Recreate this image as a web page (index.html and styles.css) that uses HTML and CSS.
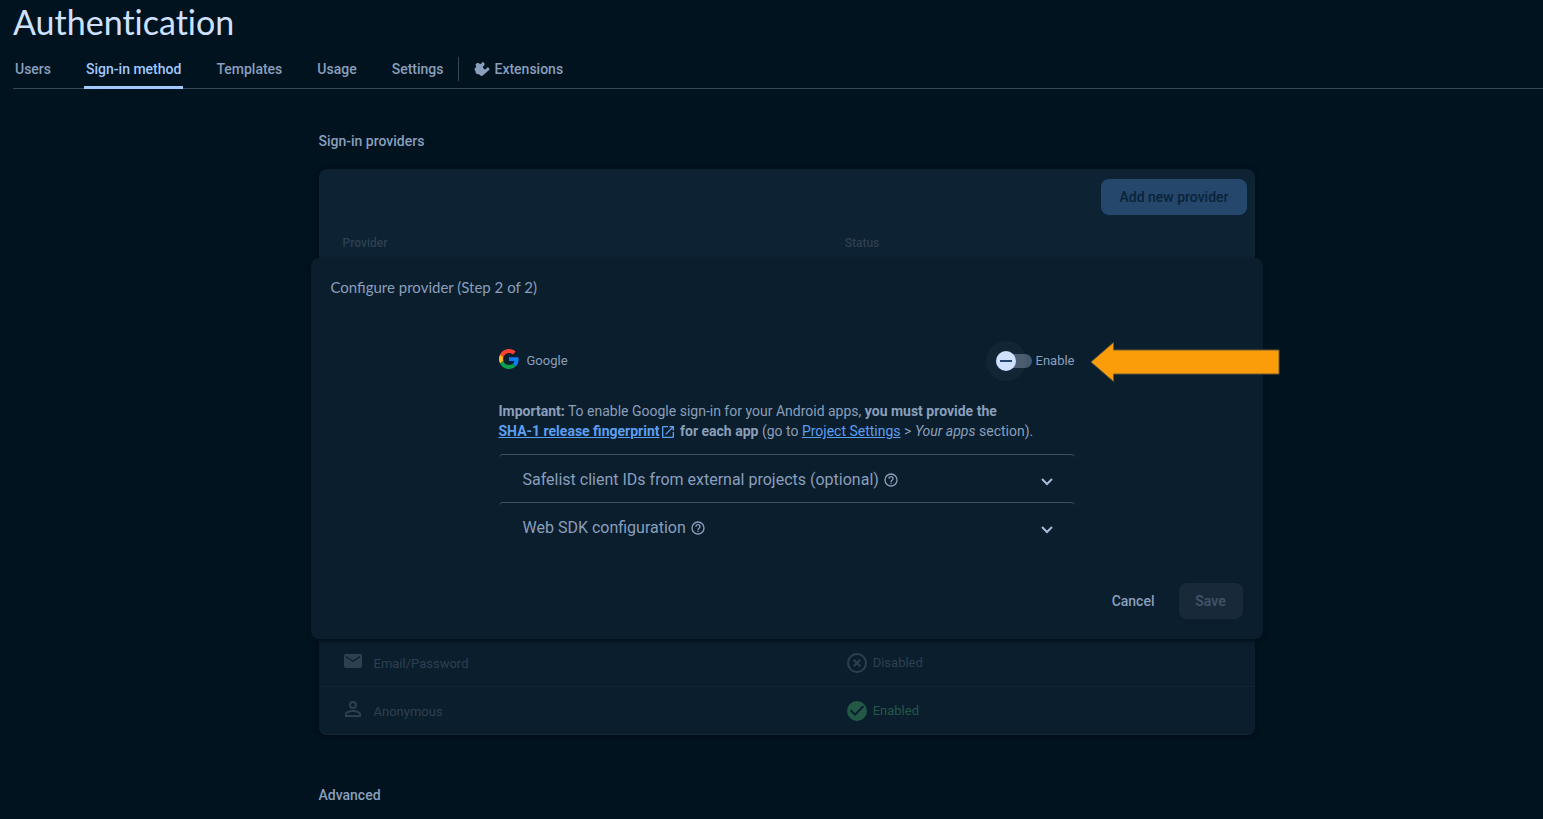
FILE: index.html
```
<!DOCTYPE html>
<html lang="en">
<head>
<meta charset="utf-8">
<title>Authentication</title>
<link rel="stylesheet" href="styles.css">
</head>
<body>
<header class="page-header">
  <h1 class="page-title">Authentication</h1>
  <nav class="tabs">
    <a class="tab" href="#users">Users</a>
    <a class="tab tab-active" href="#sign-in" aria-current="page">Sign-in method</a>
    <a class="tab" href="#templates">Templates</a>
    <a class="tab" href="#usage">Usage</a>
    <a class="tab" href="#settings">Settings</a>
    <a class="tab tab-extensions" href="#extensions">
      <svg class="ext-icon" viewBox="0 0 16 16" aria-hidden="true"><path d="M1.500 3.500 3 2h1.500L6 3l1.200-.3L8 1.300h1.500l1 1.200v1.500L9 5.400v1.400l1.400 1.400h1.400L13 6.500h1.400l1 1.200v1L8.800 14.600a2 2 0 0 1-2.400 0L5 13.300l-2.200-.2-1-1L1.600 10.500.6 9V7.500L2 6.300V5z"/></svg>
      Extensions
    </a>
  </nav>
</header>
<main class="content">
  <div class="column">
    <h2 class="section-title">Sign-in providers</h2>
    <section class="card">
      <div class="toolbar"><button class="btn btn-add" type="button">Add new provider</button></div>
      <table class="providers">
        <thead>
          <tr><th class="col-provider" scope="col">Provider</th><th class="col-status" scope="col">Status</th></tr>
        </thead>
        <tbody>
          <tr>
            <td class="editor-cell" colspan="2">
              <form class="editor">
                <h3 class="editor-title">Configure provider (Step 2 of 2)</h3>
                <div class="editor-body">
                  <div class="enable-row">
                    <span class="brand">
                      <svg class="google" viewBox="0 0 48 48" aria-hidden="true"><path fill="#ff4131" d="M24 9.500c3.540 0 6.710 1.220 9.210 3.600l6.850-6.850C35.900 2.380 30.470 0 24 0 14.620 0 6.510 5.380 2.560 13.220l7.980 6.190C12.430 13.720 17.740 9.500 24 9.500z"/><path fill="#0f7df2" d="M46.980 24.550c0-1.570-.15-3.090-.38-4.550H24v9.020h12.940c-.58 2.960-2.260 5.480-4.780 7.180l7.730 6c4.510-4.180 7.090-10.360 7.090-17.650z"/><path fill="#ffb52a" d="M10.530 28.590a14.500 14.500 0 0 1 0-9.180l-7.980-6.190a24 24 0 0 0 0 21.560z"/><path fill="#0aa04d" d="M24 48c6.480 0 11.930-2.130 15.890-5.810l-7.730-6c-2.150 1.450-4.920 2.300-8.160 2.300-6.260 0-11.570-4.220-13.470-9.910l-7.980 6.190C6.510 42.620 14.620 48 24 48z"/></svg>
                      Google
                    </span>
                    <label class="switch">
                      <input class="switch-input" type="checkbox" role="switch">
                      <span>Enable</span>
                    </label>
                    <svg class="pointer" viewBox="0 0 190 42" aria-hidden="true"><path d="M1 21 23.500 1.500V9H189v24H23.500v7.500z"/></svg>
                  </div>
                  <p class="notice"><b>Important:</b> To enable Google sign-in for your Android apps, <b>you must provide the<br><a class="link" href="#sha">SHA-1 release fingerprint</a><svg class="open-icon" viewBox="0 0 24 24" aria-hidden="true"><path d="M19 19H5V5h7V3H5a2 2 0 0 0-2 2v14a2 2 0 0 0 2 2h14c1.100 0 2-.9 2-2v-7h-2zM14 3v2h3.590l-9.830 9.830 1.410 1.410L19 6.410V10h2V3z"/></svg> for each app</b> (go to <a class="link" href="#project">Project Settings</a> &gt; <i>Your apps</i> section).</p>
                  <button class="panel" type="button">
                    <span>Safelist client IDs from external projects (optional)</span>
                    <svg class="help-icon" viewBox="0 0 24 24" aria-hidden="true"><path d="M11 18h2v-2h-2zM12 2a10 10 0 1 0 0 20 10 10 0 0 0 0-20zm0 18a8 8 0 1 1 0-16 8 8 0 0 1 0 16zm0-14a4 4 0 0 0-4 4h2a2 2 0 1 1 4 0c0 2-3 1.750-3 5h2c0-2.250 3-2.500 3-5a4 4 0 0 0-4-4z"/></svg>
                    <svg class="chevron" viewBox="0 0 12 8" aria-hidden="true"><path d="m1 1 5 5 5-5"/></svg>
                  </button>
                  <button class="panel" type="button">
                    <span>Web SDK configuration</span>
                    <svg class="help-icon" viewBox="0 0 24 24" aria-hidden="true"><path d="M11 18h2v-2h-2zM12 2a10 10 0 1 0 0 20 10 10 0 0 0 0-20zm0 18a8 8 0 1 1 0-16 8 8 0 0 1 0 16zm0-14a4 4 0 0 0-4 4h2a2 2 0 1 1 4 0c0 2-3 1.750-3 5h2c0-2.250 3-2.500 3-5a4 4 0 0 0-4-4z"/></svg>
                    <svg class="chevron" viewBox="0 0 12 8" aria-hidden="true"><path d="m1 1 5 5 5-5"/></svg>
                  </button>
                </div>
                <div class="actions">
                  <button class="btn btn-cancel" type="button">Cancel</button>
                  <button class="btn btn-save" type="submit" disabled>Save</button>
                </div>
              </form>
            </td>
          </tr>
          <tr class="provider-row">
            <td class="col-provider"><span class="item"><svg class="row-icon" viewBox="0 1 20 20" aria-hidden="true"><path d="M17 3H3a2 2 0 0 0-2 2v10a2 2 0 0 0 2 2h14a2 2 0 0 0 2-2V5a2 2 0 0 0-2-2zm0 3.500-7 4.500-7-4.500V5l7 4.500L17 5z"/></svg>Email/Password</span></td>
            <td class="col-status"><span class="status"><svg class="status-icon" viewBox="0 0 24 24" aria-hidden="true"><path d="M12 2a10 10 0 1 0 0 20 10 10 0 0 0 0-20zm0 18a8 8 0 1 1 0-16 8 8 0 0 1 0 16z"/><path d="M14.600 8 12 10.600 9.400 8 8 9.400l2.600 2.600L8 14.600 9.400 16l2.600-2.600 2.600 2.600 1.400-1.400-2.600-2.600L16 9.400z"/></svg>Disabled</span></td>
          </tr>
          <tr class="provider-row">
            <td class="col-provider"><span class="item"><svg class="row-icon" viewBox="2 2 20 20" aria-hidden="true"><path d="M12 4.900a2.100 2.100 0 1 1 0 4.200 2.100 2.100 0 0 1 0-4.200m0 9c3 0 6.100 1.460 6.100 2.100v1.100H5.900V16c0-.64 3.130-2.100 6.100-2.100M12 3a4 4 0 1 0 0 8 4 4 0 0 0 0-8zm0 9c-2.670 0-8 1.340-8 4v3h16v-3c0-2.660-5.330-4-8-4z"/></svg>Anonymous</span></td>
            <td class="col-status"><span class="status status-on"><svg class="status-icon" viewBox="0 0 24 24" aria-hidden="true"><path d="M12 2a10 10 0 1 0 0 20 10 10 0 0 0 0-20zm-2 15-5-5 1.410-1.410L10 14.170l7.590-7.590L19 8z"/></svg>Enabled</span></td>
          </tr>
        </tbody>
      </table>
    </section>
    <h2 class="section-title section-advanced">Advanced</h2>
  </div>
</main>
</body>
</html>
```
FILE: styles.css
```
* { box-sizing: border-box; }
body {
  margin: 0;
  background: #00131f;
  color: #8a9fbc;
  font: 14px/20px Roboto, sans-serif;
}
h1, h2, h3, p { margin: 0; }
.page-header { padding-left: 13px; }
.page-title {
  font: 400 34px/44px Lato, sans-serif;
  font-variant-ligatures: none;
  color: #d0e1ff;
}
.tabs {
  display: flex;
  gap: 31px;
  height: 45px;
  border-bottom: 1px solid #37485a;
}
.tab {
  display: flex;
  align-items: center;
  height: 45px;
  padding: 8px 2px 0;
  border-bottom: 3px solid transparent;
  color: #8a9fbc;
  font-weight: 500;
  text-decoration: none;
}
.tab-active {
  color: #a3c8fd;
  background: linear-gradient(#a3c8fd, #a3c8fd) bottom / 100% 3px no-repeat border-box;
}
.tab-extensions { gap: 4px; }
.tab-extensions::before {
  content: "";
  width: 1px;
  height: 24px;
  margin-left: -20px;
  margin-right: 11px;
  background: #37485a;
}
.ext-icon { width: 16px; height: 16px; fill: currentColor; }
.content { padding: 42px 0 14px 30px; }
.column { max-width: 936px; margin: 0 auto; }
.section-title { font-size: 14px; line-height: 20px; font-weight: 500; }
.section-advanced { margin-top: 50px; }
.card {
  margin-top: 18px;
  border-radius: 8px;
  background: #0d2232;
  box-shadow: 0 1px 4px #000a12;
}
.toolbar { display: flex; justify-content: flex-end; padding: 10px 8px; }
.btn {
  min-width: 64px;
  height: 36px;
  padding: 0 16px;
  border: 0;
  border-radius: 8px;
  font: 500 14px/20px Roboto, sans-serif;
}
.btn-add { padding: 0 18px; background: #24476b; color: #0a2339; }
.providers { width: 100%; table-layout: fixed; border-collapse: separate; border-spacing: 0; }
.providers th {
  height: 33px;
  padding-top: 2px;
  padding-bottom: 0;
  text-align: left;
  font-size: 12px;
  line-height: 16px;
  font-weight: 500;
  color: #2c4052;
}
.providers .col-provider { width: 56%; padding-left: 24px; }
.providers .col-status { padding-left: 2px; }
.editor-cell { padding: 0; }
.editor {
  position: relative;
  margin: 0 -8px;
  padding: 19px 20px 20px;
  border-radius: 8px;
  background: #0b1e2d;
  box-shadow: 0 2px 4px #00101a;
}
.editor-title { font: 400 15px/20px Lato, sans-serif; }
.editor-body { max-width: 576px; margin: 44px auto 0; }
.enable-row {
  position: relative;
  display: flex;
  justify-content: space-between;
  align-items: center;
  height: 40px;
  font-size: 13px;
}
.brand { display: flex; align-items: center; gap: 8px; }
.google { width: 20px; height: 20px; margin-bottom: 4px; }
.switch { display: flex; align-items: center; gap: 4px; }
.switch-input {
  appearance: none;
  position: relative;
  width: 36px;
  height: 14px;
  margin: 0;
  border-radius: 7px;
  background: #46586c;
}
.switch-input::before {
  content: "";
  position: absolute;
  left: 0;
  top: -3px;
  width: 20px;
  height: 20px;
  border-radius: 50%;
  background: #d0e1ff;
  box-shadow: 0 0 0 10px rgba(208, 225, 255, 0.04);
}
.switch-input::after {
  content: "";
  position: absolute;
  left: 4px;
  top: 6px;
  width: 12px;
  height: 2px;
  background: #27466f;
}
.pointer {
  position: absolute;
  left: 100%;
  top: 0;
  width: 190px;
  height: 42px;
  margin-left: 15px;
}
.pointer path { fill: #fa9d08; stroke: #6a5a38; stroke-width: 1; }
.notice { margin: 20px 0 13px; }
.link { color: #5c9ff0; }
.open-icon { width: 16px; height: 16px; margin-left: 1px; vertical-align: -4px; fill: #5c9ff0; }
.panel {
  display: flex;
  align-items: center;
  width: 100%;
  height: 48px;
  padding: 2px 22px 0 24px;
  border: 0;
  border-top: 1px solid #3d5060;
  border-radius: 4px 4px 0 0;
  background: transparent;
  color: #8a9fbc;
  font: 400 16px/24px Roboto, sans-serif;
}
.help-icon { width: 16px; height: 16px; margin-left: 4px; fill: currentColor; }
.chevron { width: 12px; height: 8px; margin: 4px 0 0 auto; fill: none; stroke: #a9bcd6; stroke-width: 2; }
.actions { display: flex; justify-content: flex-end; gap: 8px; margin-top: 33px; }
.btn-cancel { background: transparent; color: #8a9fbc; }
.btn-save { background: #182a39; color: #42556a; }
.provider-row { color: #2c4052; font-size: 13px; }
.provider-row td {
  height: 48px;
  padding-top: 0;
  padding-bottom: 0;
  border-bottom: 1px solid #102636;
  background: #0b1e2d;
}
.provider-row:last-child td:first-child { border-bottom-left-radius: 8px; }
.provider-row:last-child td:last-child { border-bottom-right-radius: 8px; }
.item, .status { display: flex; align-items: center; }
.item { gap: 11px; padding-top: 2px; }
.row-icon { width: 20px; height: 20px; margin-bottom: 4px; fill: currentColor; }
.status { gap: 4px; }
.status-icon { width: 24px; height: 24px; fill: currentColor; }
.status-on { color: #235847; }
```
